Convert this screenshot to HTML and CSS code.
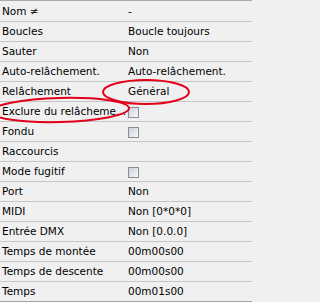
FILE: index.html
```html
<!DOCTYPE html>
<html lang="fr">
<head>
<meta charset="utf-8">
<title>Propriétés</title>
<link rel="stylesheet" href="styles.css">
</head>
<body>
<div class="grid">
  <div class="row"><span class="label">Nom ≠</span><span class="value">-</span></div>
  <div class="row"><span class="label">Boucles</span><span class="value">Boucle toujours</span></div>
  <div class="row"><span class="label">Sauter</span><span class="value">Non</span></div>
  <div class="row"><span class="label">Auto-relâchement.</span><span class="value">Auto-relâchement.</span></div>
  <div class="row"><span class="label">Relâchement</span><span class="value">Général</span></div>
  <div class="row"><span class="label">Exclure du relâcheme...</span><span class="value"><span class="check"></span></span></div>
  <div class="row"><span class="label">Fondu</span><span class="value"><span class="check"></span></span></div>
  <div class="row"><span class="label">Raccourcis</span><span class="value"></span></div>
  <div class="row"><span class="label">Mode fugitif</span><span class="value"><span class="check"></span></span></div>
  <div class="row"><span class="label">Port</span><span class="value">Non</span></div>
  <div class="row"><span class="label">MIDI</span><span class="value">Non [0*0*0]</span></div>
  <div class="row"><span class="label">Entrée DMX</span><span class="value">Non [0.0.0]</span></div>
  <div class="row"><span class="label">Temps de montée</span><span class="value">00m00s00</span></div>
  <div class="row"><span class="label">Temps de descente</span><span class="value">00m00s00</span></div>
  <div class="row last"><span class="label">Temps</span><span class="value">00m01s00</span></div>
</div>
<svg class="marks" width="252" height="302" viewBox="0 0 252 302" aria-hidden="true">
  <ellipse cx="146" cy="92" rx="43" ry="12" fill="none" stroke="#e2001a" stroke-width="2"/>
  <ellipse cx="60" cy="110" rx="69" ry="12" fill="none" stroke="#e2001a" stroke-width="2" transform="rotate(-1.5 60 110)"/>
</svg>
</body>
</html>
```
FILE: styles.css
```css
html, body {
  margin: 0;
  padding: 0;
  background: #f0f0f0;
}
body {
  width: 252px;
  height: 302px;
  overflow: hidden;
  position: relative;
  font-family: "DejaVu Sans", Verdana, sans-serif;
  font-size: 10.5px;
  color: #000;
}
.grid {
  border-top: 1px solid #a9a9a9;
  padding-top: 1px;
  display: flex;
  flex-direction: column;
}
.row {
  display: grid;
  grid-template-columns: 126px 1fr;
  height: 19px;
  line-height: 19px;
  border-bottom: 1px solid #c6c6c6;
}
.row.last {
  border-bottom-color: #9fa59c;
}
.label {
  padding-left: 2px;
  white-space: nowrap;
  overflow: hidden;
}
.value {
  padding-left: 2px;
  white-space: nowrap;
  overflow: hidden;
  display: flex;
  align-items: center;
}
.check {
  width: 9px;
  height: 9px;
  border: 1px solid #8a8d96;
  background: linear-gradient(135deg, #c9ced8 0%, #e4e7ec 55%, #fbfbfc 100%);
  margin-top: 1px;
}
.marks {
  position: absolute;
  left: 0;
  top: 0;
  pointer-events: none;
}
```
